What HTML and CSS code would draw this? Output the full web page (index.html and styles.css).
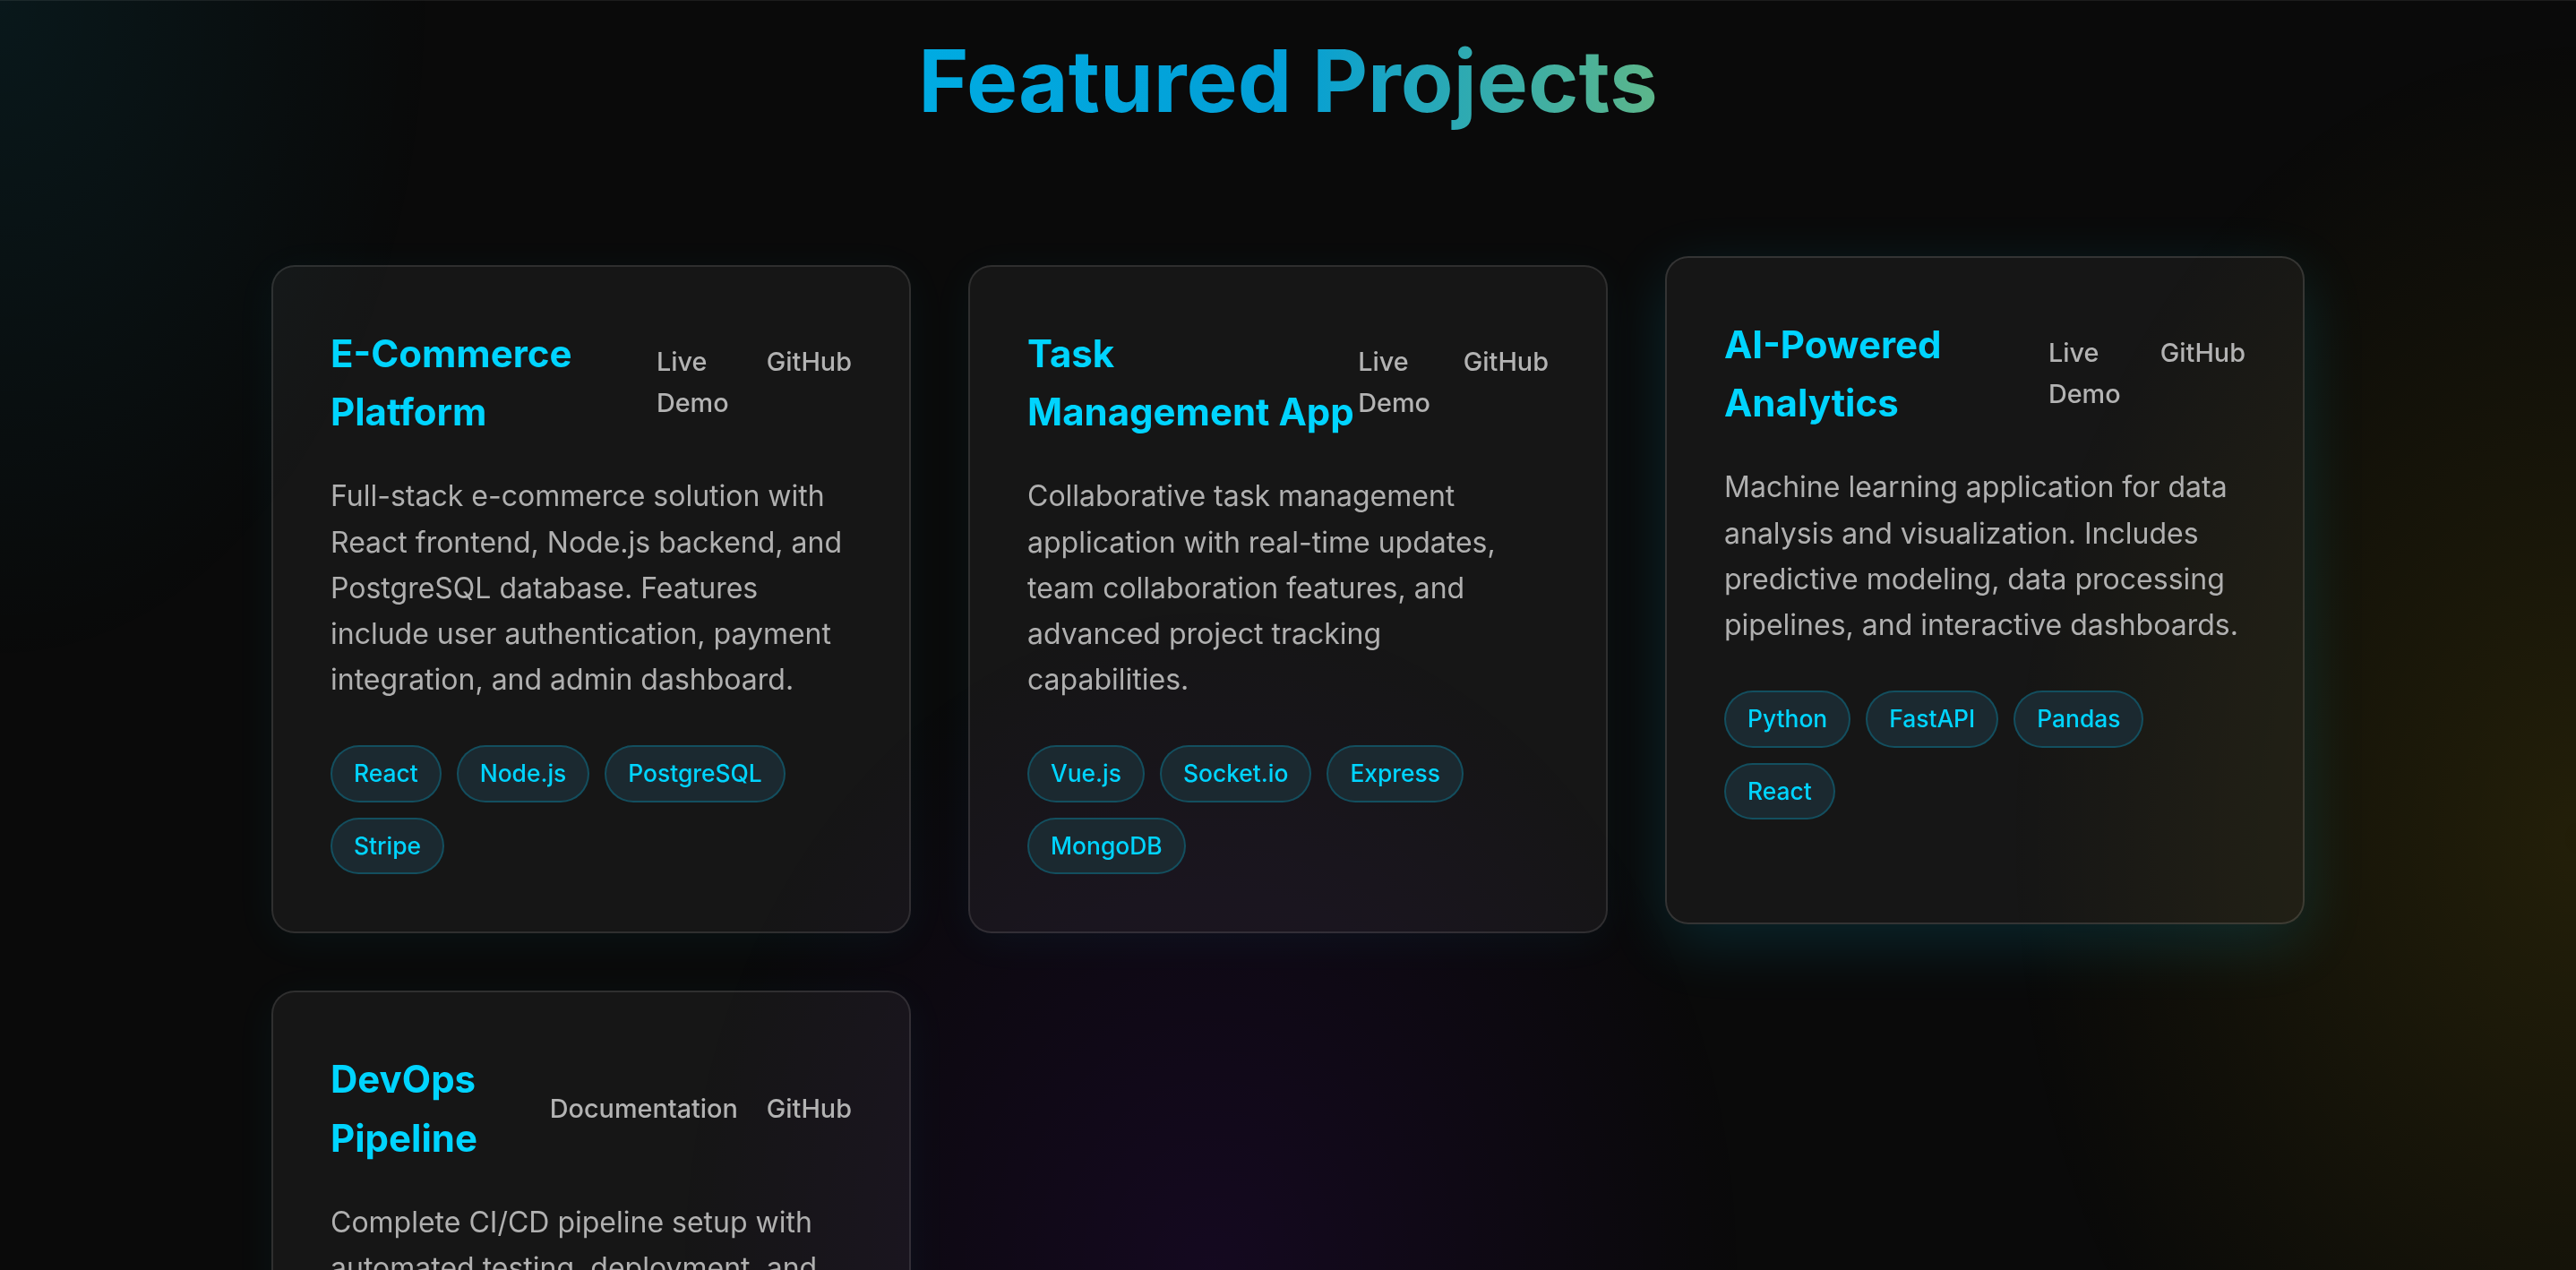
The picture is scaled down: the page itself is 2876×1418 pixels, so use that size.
FILE: index.html
```html
<!DOCTYPE html>
<html lang="en">
<head>
<meta charset="utf-8">
<title>Featured Projects</title>
<link rel="stylesheet" href="styles.css">
</head>
<body>
<div class="bg-glow"></div>
<section class="projects">
  <h2 class="section-title"><span class="gradient-text">Featured Projects</span></h2>
  <div class="projects-grid">
    <article class="project-card">
      <div class="project-header">
        <h3 class="project-title">E-Commerce Platform</h3>
        <div class="project-links">
          <a class="project-link" href="#">Live Demo</a>
          <a class="project-link" href="#">GitHub</a>
        </div>
      </div>
      <p class="project-desc">Full-stack e-commerce solution with React frontend, Node.js backend, and PostgreSQL database. Features include user authentication, payment integration, and admin dashboard.</p>
      <div class="tech-list">
        <span class="tech-tag">React</span>
        <span class="tech-tag">Node.js</span>
        <span class="tech-tag">PostgreSQL</span>
        <span class="tech-tag">Stripe</span>
      </div>
    </article>
    <article class="project-card">
      <div class="project-header">
        <h3 class="project-title">Task Management App</h3>
        <div class="project-links">
          <a class="project-link" href="#">Live Demo</a>
          <a class="project-link" href="#">GitHub</a>
        </div>
      </div>
      <p class="project-desc">Collaborative task management application with real-time updates, team collaboration features, and advanced project tracking capabilities.</p>
      <div class="tech-list">
        <span class="tech-tag">Vue.js</span>
        <span class="tech-tag">Socket.io</span>
        <span class="tech-tag">Express</span>
        <span class="tech-tag">MongoDB</span>
      </div>
    </article>
    <article class="project-card is-hovered">
      <div class="project-header">
        <h3 class="project-title">AI-Powered Analytics</h3>
        <div class="project-links">
          <a class="project-link" href="#">Live Demo</a>
          <a class="project-link" href="#">GitHub</a>
        </div>
      </div>
      <p class="project-desc">Machine learning application for data analysis and visualization. Includes predictive modeling, data processing pipelines, and interactive dashboards.</p>
      <div class="tech-list">
        <span class="tech-tag">Python</span>
        <span class="tech-tag">FastAPI</span>
        <span class="tech-tag">Pandas</span>
        <span class="tech-tag">React</span>
      </div>
    </article>
    <article class="project-card">
      <div class="project-header">
        <h3 class="project-title">DevOps Pipeline</h3>
        <div class="project-links">
          <a class="project-link" href="#">Documentation</a>
          <a class="project-link" href="#">GitHub</a>
        </div>
      </div>
      <p class="project-desc">Complete CI/CD pipeline setup with automated testing, deployment, and monitoring. Includes infrastructure as code and container orchestration.</p>
      <div class="tech-list">
        <span class="tech-tag">Docker</span>
        <span class="tech-tag">Kubernetes</span>
        <span class="tech-tag">Jenkins</span>
        <span class="tech-tag">AWS</span>
      </div>
    </article>
  </div>
</section>
</body>
</html>
```
FILE: styles.css
```css
* {
  box-sizing: border-box;
}

html, body {
  margin: 0;
  padding: 0;
}

body {
  background: #0a0a0a;
  color: #e5e5e5;
  font-family: "Inter", "Noto Sans", sans-serif;
  min-height: 100vh;
}

.bg-glow {
  position: fixed;
  inset: 0;
  z-index: 0;
  pointer-events: none;
  background:
    radial-gradient(ellipse 650px 1000px at 0% 0%, rgba(0, 212, 255, 0.07), transparent 75%),
    radial-gradient(ellipse 800px 1000px at 47% 100%, rgba(128, 0, 255, 0.09), transparent 75%),
    radial-gradient(ellipse 850px 1200px at 100% 66%, rgba(255, 215, 0, 0.1), transparent 75%);
}

.projects {
  position: relative;
  z-index: 1;
  border-top: 1px solid rgba(255, 255, 255, 0.08);
  padding: 32px 0 128px;
}

.section-title {
  margin: 0 0 148px;
  text-align: center;
  font-size: 96px;
  line-height: 1.2;
  font-weight: 700;
}

.gradient-text {
  background: linear-gradient(90deg, #00abe2 0%, #039fd6 50%, #5db68a 100%);
  -webkit-background-clip: text;
  background-clip: text;
  color: transparent;
}

.projects-grid {
  width: 2270px;
  margin: 0 auto;
  display: grid;
  grid-template-columns: repeat(3, 1fr);
  gap: 64px;
}

.project-card {
  background: rgba(255, 255, 255, 0.05);
  border: 2px solid rgba(255, 255, 255, 0.11);
  border-radius: 26px;
  padding: 64px;
  box-shadow: 0 8px 48px rgba(0, 212, 255, 0.05);
}

.project-card.is-hovered {
  transform: translateY(-10px);
  border-color: rgba(255, 255, 255, 0.13);
  box-shadow: 0 20px 70px rgba(0, 212, 255, 0.14);
}

.project-header {
  display: flex;
  justify-content: space-between;
  align-items: center;
  margin-bottom: 36px;
}

.project-title {
  margin: 0;
  font-size: 42px;
  line-height: 1.55;
  font-weight: 650;
  color: #00d4ff;
}

.project-links {
  display: flex;
  gap: 32px;
}

.project-link {
  font-size: 28.8px;
  line-height: 1.6;
  font-weight: 500;
  color: #b3b3b3;
  text-decoration: none;
}

.project-desc {
  margin: 0 0 48px;
  font-size: 32px;
  line-height: 1.6;
  color: #b0b0b0;
}

.tech-list {
  display: flex;
  flex-wrap: wrap;
  gap: 17px 17px;
}

.tech-tag {
  display: inline-block;
  padding: 8px 24px;
  font-size: 26.4px;
  line-height: 1.65;
  font-weight: 500;
  color: #00d4ff;
  background: #1b2930;
  border: 2px solid rgba(0, 180, 220, 0.28);
  border-radius: 40px;
}
```
